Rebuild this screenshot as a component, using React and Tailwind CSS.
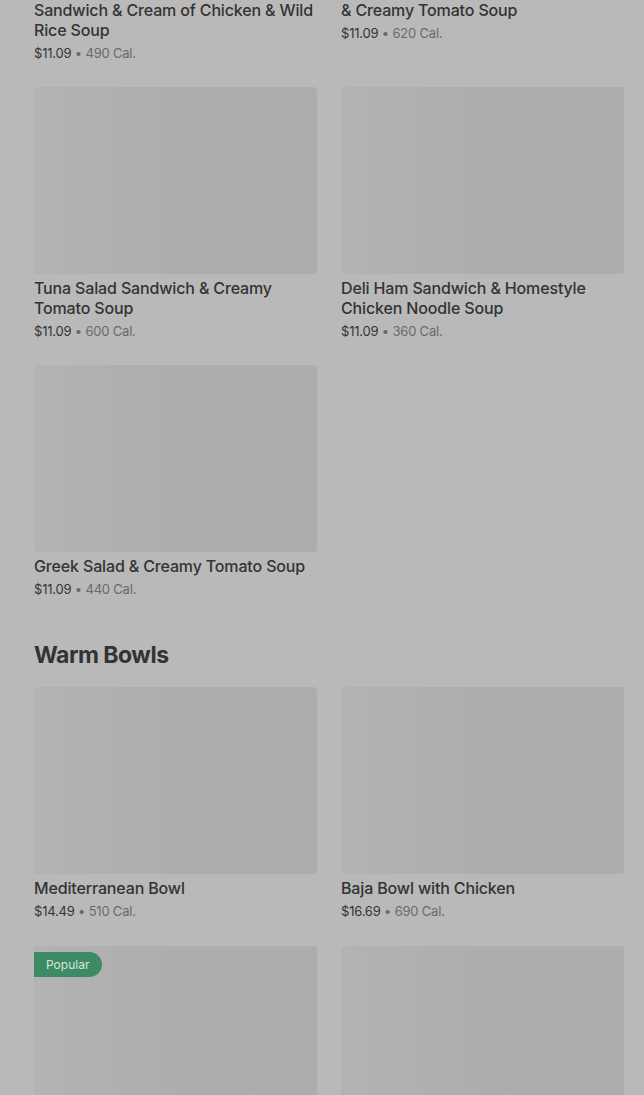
const sandwiches = [
  { title: 'Half Napa Almond Chicken Salad Sandwich & Cream of Chicken & Wild Rice Soup', price: '$11.09', cal: '490 Cal.' },
  { title: 'Half Chipotle Chicken Avocado Melt & Creamy Tomato Soup', price: '$11.09', cal: '620 Cal.' },
  { title: 'Tuna Salad Sandwich & Creamy Tomato Soup', price: '$11.09', cal: '600 Cal.' },
  { title: 'Deli Ham Sandwich & Homestyle Chicken Noodle Soup', price: '$11.09', cal: '360 Cal.' },
  { title: 'Greek Salad & Creamy Tomato Soup', price: '$11.09', cal: '440 Cal.' },
];

const bowls = [
  { title: 'Mediterranean Bowl', price: '$14.49', cal: '510 Cal.' },
  { title: 'Baja Bowl with Chicken', price: '$16.69', cal: '690 Cal.' },
  { title: 'Teriyaki Chicken Broccoli Bowl', price: '$14.49', cal: '520 Cal.', popular: true },
  { title: 'Chicken Tortilla Soup Bowl', price: '$12.19', cal: '370 Cal.' },
];

function Card({ item }) {
  return (
    <div>
      <div className="relative h-[187px] rounded-[3px] bg-gradient-to-r from-[#b3b3b3] via-[#adadad] to-[#adadad]">
        {item.popular && (
          <span className="absolute left-0 top-1.5 h-[25px] pl-3 pr-[13px] flex items-center rounded-r-full bg-[#3e8a64] text-[12px] text-[#d6e8dc]">
            Popular
          </span>
        )}
      </div>
      <h3 className="mt-1 text-[16px] leading-5 font-medium text-[#333] tracking-[-0.15px]">{item.title}</h3>
      <p className="mt-1 text-[13px] leading-[18px] text-[#333] tracking-[-0.2px]">
        {item.price}
        <span className="text-[#6a6a6a]"> • {item.cal}</span>
      </p>
    </div>
  );
}

export default function App() {
  return (
    <div className="h-[1095px] overflow-hidden bg-[#b9b9b9] font-['Inter',sans-serif]">
      <div className="pl-[34px] pr-5 -mt-[211px]">
        <div className="grid grid-cols-2 gap-x-6 gap-y-[25px]">
          {sandwiches.map((s, i) => (
            <Card key={i} item={s} />
          ))}
        </div>

        <h2 className="mt-[41px] mb-4 text-[23px] leading-8 font-bold text-[#333] tracking-[-0.5px]">Warm Bowls</h2>
        <div className="grid grid-cols-2 gap-x-6 gap-y-[26px]">
          {bowls.map((b, i) => (
            <Card key={i} item={b} />
          ))}
        </div>
      </div>
    </div>
  );
}
